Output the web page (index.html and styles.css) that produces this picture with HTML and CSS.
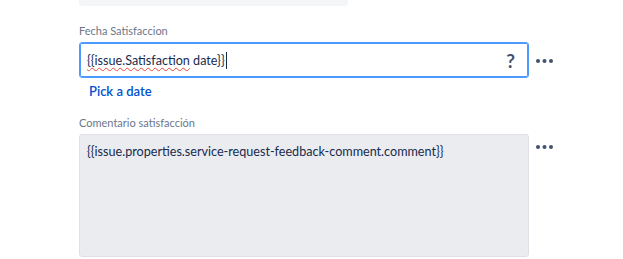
FILE: index.html
```html
<!DOCTYPE html>
<html lang="es">
<head>
    <meta charset="UTF-8">
    <title>Campos</title>
    <link rel="stylesheet" href="styles.css">
</head>
<body>
    <div class="form">
        <div class="prev-box"></div>

        <div class="field first">
            <label class="field-label">Fecha Satisfaccion</label>
            <div class="field-row">
                <div class="input focused">
                    <span class="value"><span class="misspelled">{{issue.Satisfaction</span> date}}</span><span class="caret"></span>
                    <span class="help">?</span>
                </div>
                <svg class="more" width="18" height="6" viewBox="0 0 18 6">
                    <circle cx="3" cy="3" r="2"/>
                    <circle cx="9.5" cy="3" r="2"/>
                    <circle cx="16" cy="3" r="2"/>
                </svg>
            </div>
            <a class="pick-link" href="#">Pick a date</a>
        </div>

        <div class="field">
            <label class="field-label">Comentario satisfacción</label>
            <div class="field-row">
                <div class="textarea">{{issue.properties.service-request-feedback-comment.comment}}</div>
                <svg class="more" width="18" height="6" viewBox="0 0 18 6">
                    <circle cx="3" cy="3" r="2"/>
                    <circle cx="9.5" cy="3" r="2"/>
                    <circle cx="16" cy="3" r="2"/>
                </svg>
            </div>
        </div>
    </div>
</body>
</html>
```

FILE: styles.css
```css
body {
    margin: 0;
    font-family: Lato, "Noto Sans", sans-serif;
    color: #172b4d;
    background: #fff;
}
.form {
    padding-left: 79px;
}
.prev-box {
    width: 269px;
    height: 6px;
    background-color: #f4f5f7;
    border-radius: 0 0 3px 3px;
}
.field {
    margin-top: 16px;
}
.field.first {
    margin-top: 17px;
}
.field-label {
    display: block;
    font-size: 11px;
    color: #6b778c;
    line-height: 16px;
    margin-bottom: 3px;
}
.field-row {
    display: flex;
    align-items: flex-start;
}
.input, .textarea {
    width: 450px;
    box-sizing: border-box;
    border-radius: 3px;
    font-size: 12.6px;
}
.input {
    height: 36px;
    border: 1px solid #4c9aff;
    box-shadow: 0 0 0 1px #4c9aff inset;
    display: flex;
    align-items: center;
    padding: 0 10px 0 7px;
}
.value {
    white-space: nowrap;
}
.misspelled {
    text-decoration: underline wavy #e5493a;
    text-decoration-thickness: 1px;
    text-underline-offset: 2px;
}
.caret {
    display: inline-block;
    width: 1px;
    height: 17px;
    background: #172b4d;
    margin-left: 1px;
}
.help {
    margin-left: auto;
    font-size: 19px;
    font-weight: bold;
    color: #42526e;
    margin-right: 3px;
}
.textarea {
    height: 123px;
    background-color: #ebecf0;
    border: 1px solid #dfe1e6;
    padding: 8px 7px;
    line-height: 18px;
}
.more {
    margin-left: 6px;
    margin-top: 16px;
    fill: #42526e;
}
.textarea + .more {
    margin-top: 10px;
}
.pick-link {
    display: inline-block;
    margin: 5px 0 0 10px;
    color: #0052cc;
    text-decoration: none;
    font-size: 13px;
    font-weight: 600;
}
```
